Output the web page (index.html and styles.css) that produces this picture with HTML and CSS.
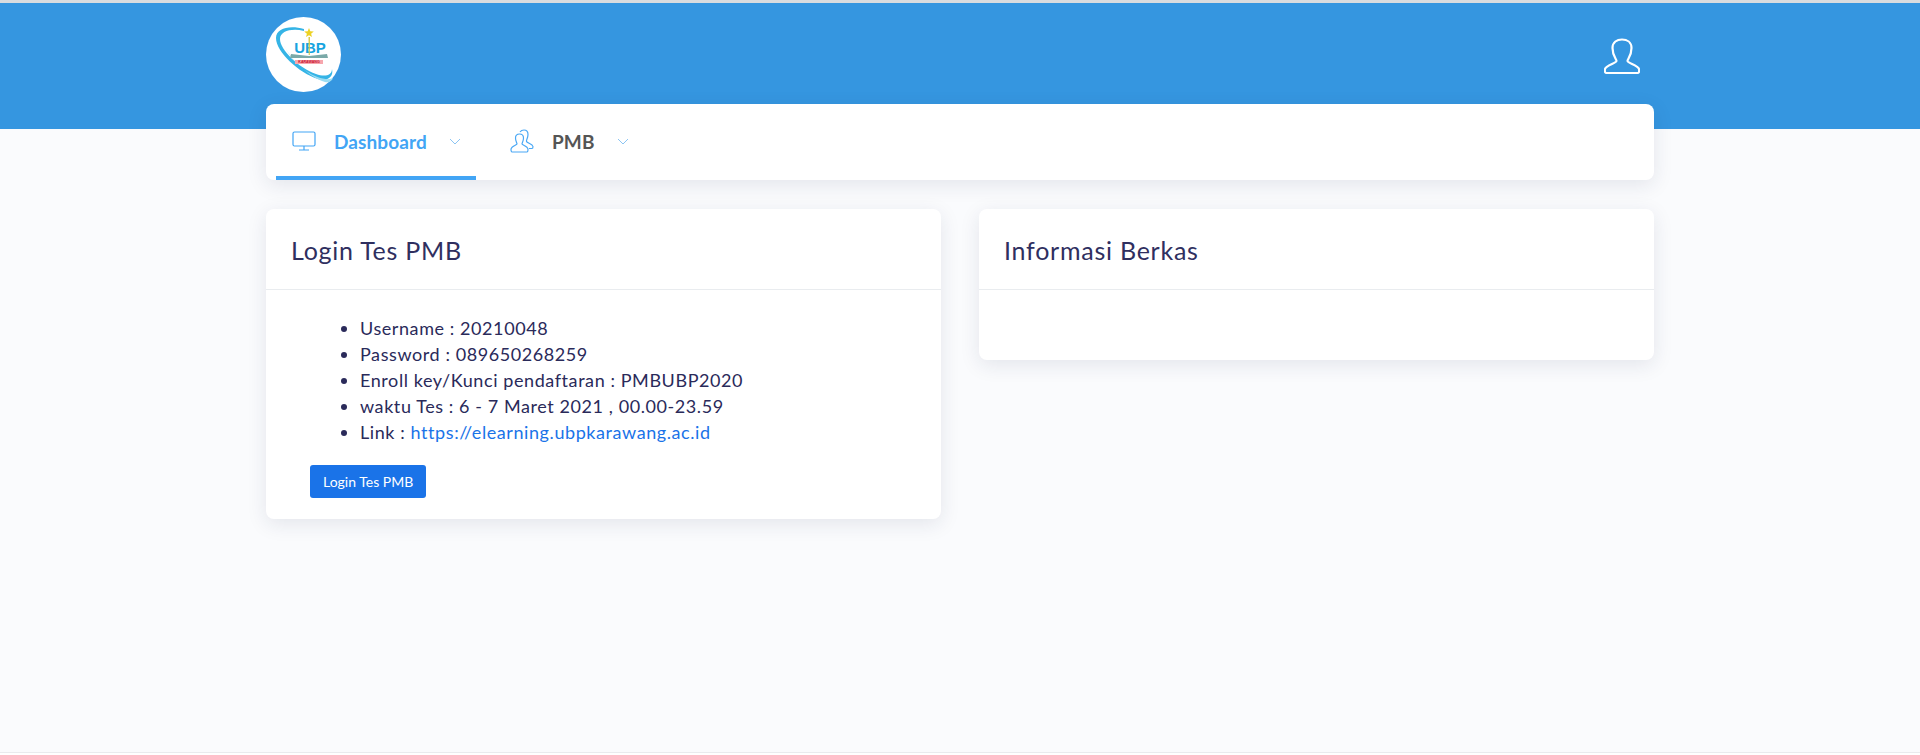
FILE: index.html
```html
<!DOCTYPE html>
<html lang="en">
<head>
    <meta charset="UTF-8">
    <meta name="viewport" content="width=device-width, initial-scale=1.0">
    <title>PMB UBP Karawang</title>
    <link rel="stylesheet" href="styles.css">
</head>
<body>
    <header class="topbar">
        <div class="container topbar-inner">
            <svg class="logo" viewBox="0 0 75 75">
                <circle cx="37.5" cy="37.5" r="37.5" fill="#fff"/>
                <path d="M38 12 C24 8 10 11 10 21 C10 35 33 56 52 62 C61 65 68 60 66 52 C66 59 58 60 50 57 C33 51 14 33 14 22 C14 14 26 11 38 14Z" fill="#35b4e6"/>
                <path d="M17 26 C23 41 44 61 59 65 C63 66 66 64 67 61 C62 64 50 61 40 54 C30 47 21 36 17 26Z" fill="#9adcf2"/>
                <polygon points="43,11 44.300,14.300 47.800,14.500 45.100,16.700 46,20.100 43,18.200 40,20.100 40.900,16.700 38.200,14.500 41.700,14.300" fill="#ecd224"/>
                <text class="logo-ubp" x="44" y="36">UBP</text>
                <path d="M42.500 20 L44 20 L43.800 38 L42.700 38Z" fill="#d8c94a"/>
                <path d="M25 37 L43 39 L61 37 L62 41 L24 41Z" fill="#7aa9a8"/>
                <rect x="29" y="43" width="28" height="4" fill="#f7a6ad"/>
                <text class="logo-sub" x="43" y="46.400">KARAWANG</text>
            </svg>
            <svg class="user-icon" viewBox="0 0 36 36" fill="none" stroke="#fff" stroke-width="2.2" stroke-linejoin="round">
                <path d="M12.500 23 C12.500 21 8.500 18 8.500 10 C8.500 4 13 1.500 18 1.500 C23 1.500 27.500 4 27.500 10 C27.500 18 23.500 21 23.500 23 C23.500 25 34.500 27.500 35 31 C35.500 34 35 35 33 35 L3 35 C1 35 .500 34 1 31 C1.500 27.500 12.500 25 12.500 23Z"/>
            </svg>
        </div>
    </header>

    <div class="container">
        <nav class="menu">
            <a class="menu-item active" href="#">
                <svg class="menu-icon" viewBox="0 0 24 20" fill="none" stroke="currentColor" stroke-width="1.2">
                    <rect x="1" y="1" width="22" height="14" rx="1.500"/>
                    <path d="M12 15 V19 M7 19 H17"/>
                </svg>
                <span class="menu-label">Dashboard</span>
                <svg class="chevron" viewBox="0 0 12 7" fill="none" stroke="currentColor"><path d="M1 1 L6 6 L11 1"/></svg>
            </a>
            <a class="menu-item" href="#">
                <svg class="menu-icon people" viewBox="0 0 24 24" fill="none" stroke="#4aa8f5" stroke-width="1.200" stroke-linejoin="round">
                    <path d="M7 15 C7 14 5.500 12 5.500 9 C5.500 6 7.500 5 9.500 5 C11.500 5 13.500 6 13.500 9 C13.500 12 12 14 12 15 C12 16 17.500 17 18 20 C18 22 17.500 23 17 23 L2 23 C1.500 23 1 22 1 20 C1.500 17 7 16 7 15Z"/>
                    <path d="M10 3 C11 1.500 12.500 1 14 1 C16.500 1 18 3 18 5.500 C18 9 16 11 16.500 12.500 C17 14 22.500 15 23 17.500 C23 19 22.500 19.500 22 19.500 L19 19.500"/>
                </svg>
                <span class="menu-label">PMB</span>
                <svg class="chevron" viewBox="0 0 12 7" fill="none" stroke="#8cc5f3"><path d="M1 1 L6 6 L11 1"/></svg>
            </a>
        </nav>

        <main class="cards">
            <section class="card">
                <h4 class="card-title">Login Tes PMB</h4>
                <div class="card-body">
                    <ul class="info-list">
                        <li>Username : 20210048</li>
                        <li>Password : 089650268259</li>
                        <li>Enroll key/Kunci pendaftaran : PMBUBP2020</li>
                        <li>waktu Tes : 6 - 7 Maret 2021 , 00.00-23.59</li>
                        <li>Link : <a href="#">https://elearning.ubpkarawang.ac.id</a></li>
                    </ul>
                    <a class="btn" href="#">Login Tes PMB</a>
                </div>
            </section>
            <section class="card">
                <h4 class="card-title">Informasi Berkas</h4>
                <div class="card-body empty"></div>
            </section>
        </main>
    </div>

    <footer class="footer"></footer>
</body>
</html>
```
FILE: styles.css
```css
* {
    box-sizing: border-box;
}
html, body {
    height: 100%;
}
body {
    margin: 0;
    display: flex;
    flex-direction: column;
    font-family: Lato, "Open Sans", sans-serif;
    color: #2a2a5a;
    background-color: #fafbfd;
    overflow: hidden;
}
a {
    text-decoration: none;
}
.container {
    width: 1388px;
    margin: 0 auto;
}
.topbar {
    height: 129px;
    border-top: 3px solid #d9dcdf;
    background-color: #3596e0;
}
.topbar-inner {
    display: flex;
    align-items: flex-start;
    justify-content: space-between;
    padding-top: 14px;
}
.logo {
    width: 75px;
    height: 75px;
}
.logo-ubp {
    font: 700 15px "Liberation Sans", sans-serif;
    fill: #17a4e0;
    text-anchor: middle;
}
.logo-sub {
    font: 700 3.600px "Liberation Sans", sans-serif;
    fill: #c8102e;
    text-anchor: middle;
}
.user-icon {
    width: 36px;
    height: 36px;
    margin: 21px 14px 0 0;
}
.menu {
    display: flex;
    height: 76px;
    margin-top: -25px;
    padding-left: 10px;
    background-color: #fff;
    border-radius: 8px;
    box-shadow: 0 5px 20px rgba(30, 40, 80, 0.1);
    position: relative;
}
.menu-item {
    display: flex;
    align-items: center;
    height: 76px;
    padding: 2px 0 0 34px;
    border-bottom: 4px solid transparent;
    color: #555;
    font-size: 19px;
    font-weight: 700;
    letter-spacing: 0.1px;
}
.menu-item.active {
    width: 200px;
    padding-left: 16px;
    border-bottom-color: #42a5f5;
    color: #42a5f5;
}
.menu-icon {
    width: 24px;
    height: 20px;
    margin-right: 18px;
}
.menu-icon.people {
    height: 24px;
}
.chevron {
    width: 12px;
    height: 7px;
    margin-left: 22px;
    color: #8cc5f3;
}
.cards {
    display: grid;
    grid-template-columns: 675px 675px;
    gap: 38px;
    align-items: start;
    margin-top: 29px;
}
.card {
    background-color: #fff;
    border-radius: 8px;
    box-shadow: 0 5px 20px rgba(30, 40, 80, 0.1);
}
.card-title {
    margin: 0;
    height: 81px;
    padding: 26px 25px 0;
    border-bottom: 1px solid #e9ecef;
    color: #2f2f5f;
    font-size: 25px;
    font-weight: 400;
    line-height: 30px;
    letter-spacing: 0.750px;
}
.card-body {
    padding: 25px 44px 21px;
}
.card-body.empty {
    height: 70px;
    padding: 0;
}
.info-list {
    margin: 0 0 20px;
    padding-left: 50px;
    font-size: 18px;
    line-height: 26px;
    letter-spacing: 0.580px;
}
.info-list a {
    color: #1a73e8;
}
.btn {
    display: inline-block;
    height: 33px;
    padding: 0 13px;
    border-radius: 3px;
    background-color: #1a73e8;
    color: #fff;
    font-size: 14px;
    line-height: 33px;
}
.footer {
    margin-top: auto;
    height: 3px;
    border-top: 1px solid #e9ebee;
    background-color: #fff;
}
```
